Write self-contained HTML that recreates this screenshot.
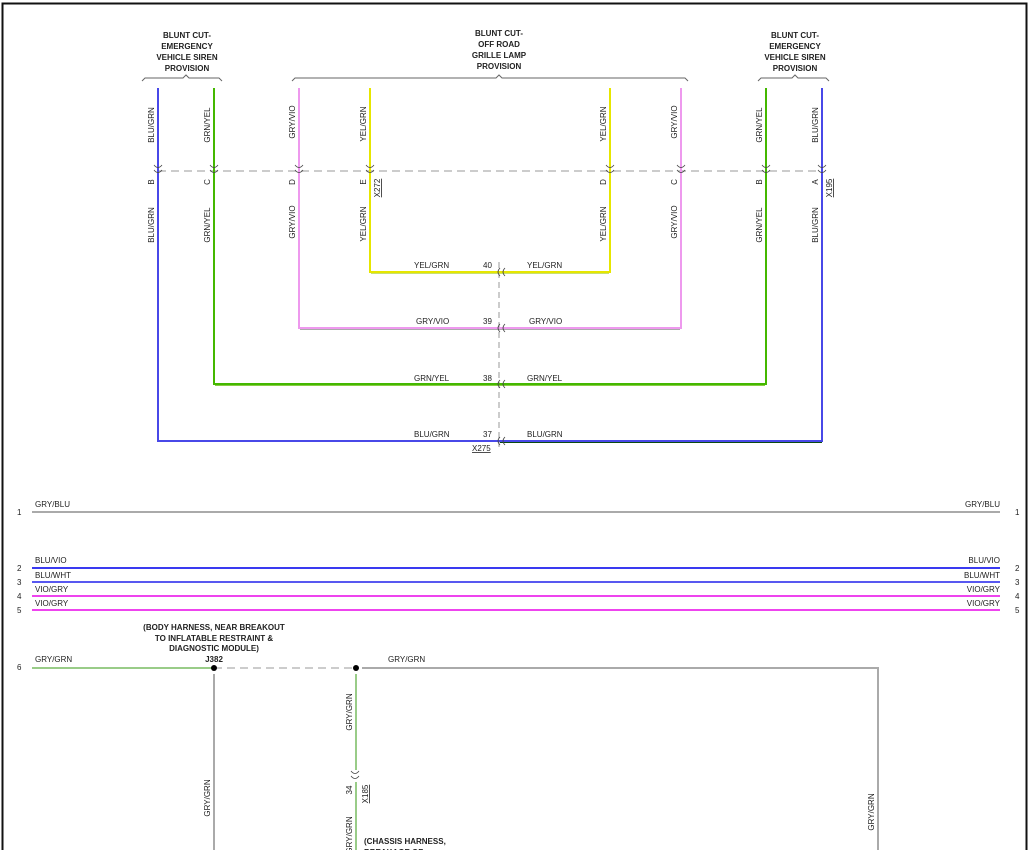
<!DOCTYPE html>
<html><head><meta charset="utf-8"><style>
html,body{margin:0;padding:0;background:#fff;}
svg{display:block;font-family:"Liberation Sans",Arial,sans-serif;}
.t{font-size:8px;fill:#222;}
.b{font-size:8px;font-weight:bold;fill:#222;}
</style></head><body>
<svg width="1030" height="850" viewBox="0 0 1030 850" xmlns="http://www.w3.org/2000/svg">
<rect x="2.5" y="3.5" width="1024" height="850" fill="none" stroke="#111" stroke-width="2"/>

<!-- headers -->
<g class="b" text-anchor="middle">
<text x="187" y="38">BLUNT CUT-</text><text x="187" y="49">EMERGENCY</text><text x="187" y="60">VEHICLE SIREN</text><text x="187" y="71">PROVISION</text>
<text x="499" y="36">BLUNT CUT-</text><text x="499" y="47">OFF ROAD</text><text x="499" y="58">GRILLE LAMP</text><text x="499" y="69">PROVISION</text>
<text x="795" y="38">BLUNT CUT-</text><text x="795" y="49">EMERGENCY</text><text x="795" y="60">VEHICLE SIREN</text><text x="795" y="71">PROVISION</text>
</g>
<g fill="none" stroke="#666" stroke-width="1">
<path d="M142 81 l3 -3 H183 l3 -3 l3 3 H219 l3 3"/>
<path d="M292 81 l3 -3 H496 l3 -3 l3 3 H685 l3 3"/>
<path d="M758 81 l3 -3 H792 l3 -3 l3 3 H826 l3 3"/>
</g>

<!-- dashed connector line -->
<line x1="158" y1="171" x2="822" y2="171" stroke="#bbb" stroke-width="1.5" stroke-dasharray="8,5"/>
<line x1="499" y1="262" x2="499" y2="447" stroke="#999" stroke-width="1" stroke-dasharray="6,4"/>

<!-- vertical wires -->
<g stroke-width="2" fill="none">
<path d="M158 88 V441 H822 V88" stroke="#4848e8"/>
<path d="M214 88 V384 H766 V88" stroke="#44b800"/>
<path d="M299 88 V328 H681 V88" stroke="#ee99ee"/>
<path d="M370 88 V272 H610 V88" stroke="#e6e600"/>
</g>
<g stroke-width="1" fill="none">
<path d="M500 442.5 H822" stroke="#0a4a10"/>
<path d="M300 329.5 H680" stroke="#aaa"/>
<path d="M215 385.5 H765" stroke="#88cc44"/>
<path d="M371 273.5 H609" stroke="#c8e070"/>
</g>

<!-- connector symbols at y=171 -->
<g fill="none" stroke="#444" stroke-width="0.8">
<path d="M154 165 q4 5 8 0 M154 170 q4 5 8 0"/>
<path d="M210 165 q4 5 8 0 M210 170 q4 5 8 0"/>
<path d="M295 165 q4 5 8 0 M295 170 q4 5 8 0"/>
<path d="M366 165 q4 5 8 0 M366 170 q4 5 8 0"/>
<path d="M606 165 q4 5 8 0 M606 170 q4 5 8 0"/>
<path d="M677 165 q4 5 8 0 M677 170 q4 5 8 0"/>
<path d="M762 165 q4 5 8 0 M762 170 q4 5 8 0"/>
<path d="M818 165 q4 5 8 0 M818 170 q4 5 8 0"/>
<path d="M500 268 q-4 4 0 8 M505 268 q-4 4 0 8"/>
<path d="M500 324 q-4 4 0 8 M505 324 q-4 4 0 8"/>
<path d="M500 380 q-4 4 0 8 M505 380 q-4 4 0 8"/>
<path d="M500 437 q-4 4 0 8 M505 437 q-4 4 0 8"/>
<path d="M351 771 q4 5 8 0 M351 776 q4 5 8 0"/>
</g>

<!-- vertical labels -->
<g class="t" text-anchor="middle">
<text transform="translate(154,125) rotate(-90)">BLU/GRN</text>
<text transform="translate(154,225) rotate(-90)">BLU/GRN</text>
<text transform="translate(154,182) rotate(-90)">B</text>
<text transform="translate(210,125) rotate(-90)">GRN/YEL</text>
<text transform="translate(210,225) rotate(-90)">GRN/YEL</text>
<text transform="translate(210,182) rotate(-90)">C</text>
<text transform="translate(295,122) rotate(-90)">GRY/VIO</text>
<text transform="translate(295,222) rotate(-90)">GRY/VIO</text>
<text transform="translate(295,182) rotate(-90)">D</text>
<text transform="translate(366,124) rotate(-90)">YEL/GRN</text>
<text transform="translate(366,224) rotate(-90)">YEL/GRN</text>
<text transform="translate(366,182) rotate(-90)">E</text>
<text transform="translate(380,188) rotate(-90)" text-decoration="underline">X272</text>
<text transform="translate(606,124) rotate(-90)">YEL/GRN</text>
<text transform="translate(606,224) rotate(-90)">YEL/GRN</text>
<text transform="translate(606,182) rotate(-90)">D</text>
<text transform="translate(677,122) rotate(-90)">GRY/VIO</text>
<text transform="translate(677,222) rotate(-90)">GRY/VIO</text>
<text transform="translate(677,182) rotate(-90)">C</text>
<text transform="translate(762,125) rotate(-90)">GRN/YEL</text>
<text transform="translate(762,225) rotate(-90)">GRN/YEL</text>
<text transform="translate(762,182) rotate(-90)">B</text>
<text transform="translate(818,125) rotate(-90)">BLU/GRN</text>
<text transform="translate(818,225) rotate(-90)">BLU/GRN</text>
<text transform="translate(818,182) rotate(-90)">A</text>
<text transform="translate(832,188) rotate(-90)" text-decoration="underline">X195</text>
</g>

<!-- horizontal labels -->
<g class="t">
<text x="414" y="268">YEL/GRN</text><text x="483" y="268">40</text><text x="527" y="268">YEL/GRN</text>
<text x="416" y="324">GRY/VIO</text><text x="483" y="324">39</text><text x="529" y="324">GRY/VIO</text>
<text x="414" y="381">GRN/YEL</text><text x="483" y="381">38</text><text x="527" y="381">GRN/YEL</text>
<text x="414" y="437">BLU/GRN</text><text x="483" y="437">37</text><text x="527" y="437">BLU/GRN</text>
<text x="472" y="451" text-decoration="underline">X275</text>
</g>

<!-- bus lines -->
<g stroke-width="2">
<line x1="32" y1="512" x2="1000" y2="512" stroke="#aaa"/>
<line x1="32" y1="568" x2="1000" y2="568" stroke="#3a3af0"/>
<line x1="32" y1="582" x2="1000" y2="582" stroke="#5858f0"/>
<line x1="32" y1="596" x2="1000" y2="596" stroke="#ee44ee"/>
<line x1="32" y1="610" x2="1000" y2="610" stroke="#ee44ee"/>
</g>
<g class="t">
<text x="35" y="507">GRY/BLU</text><text x="1000" y="507" text-anchor="end">GRY/BLU</text>
<text x="35" y="563">BLU/VIO</text><text x="1000" y="563" text-anchor="end">BLU/VIO</text>
<text x="35" y="578">BLU/WHT</text><text x="1000" y="578" text-anchor="end">BLU/WHT</text>
<text x="35" y="592">VIO/GRY</text><text x="1000" y="592" text-anchor="end">VIO/GRY</text>
<text x="35" y="606">VIO/GRY</text><text x="1000" y="606" text-anchor="end">VIO/GRY</text>
<text x="17" y="515">1</text><text x="1015" y="515">1</text>
<text x="17" y="571">2</text><text x="1015" y="571">2</text>
<text x="17" y="585">3</text><text x="1015" y="585">3</text>
<text x="17" y="599">4</text><text x="1015" y="599">4</text>
<text x="17" y="613">5</text><text x="1015" y="613">5</text>
<text x="17" y="670">6</text>
</g>

<!-- bottom GRY/GRN -->
<line x1="214" y1="668" x2="355" y2="668" stroke="#bbb" stroke-width="1.5" stroke-dasharray="8,5"/>
<g stroke-width="2" fill="none">
<path d="M32 668 H212" stroke="#99cc88"/>
<path d="M362 668 H878 V850" stroke="#aaa"/>
<path d="M214 674 V850" stroke="#aaa"/>
<path d="M356 674 V770 M356 782 V850" stroke="#99cc88"/>
</g>
<circle cx="214" cy="668" r="3" fill="#000"/>
<circle cx="356" cy="668" r="3" fill="#000"/>
<g class="b" text-anchor="middle">
<text x="214" y="630">(BODY HARNESS, NEAR BREAKOUT</text>
<text x="214" y="641">TO INFLATABLE RESTRAINT &amp;</text>
<text x="214" y="651">DIAGNOSTIC MODULE)</text>
<text x="214" y="662">J382</text>
</g>
<g class="t">
<text x="35" y="662">GRY/GRN</text>
<text x="388" y="662">GRY/GRN</text>
<text transform="translate(210,798) rotate(-90)" text-anchor="middle">GRY/GRN</text>
<text transform="translate(352,712) rotate(-90)" text-anchor="middle">GRY/GRN</text>
<text transform="translate(352,835) rotate(-90)" text-anchor="middle">GRY/GRN</text>
<text transform="translate(352,790) rotate(-90)" text-anchor="middle">34</text>
<text transform="translate(368,794) rotate(-90)" text-anchor="middle" text-decoration="underline">X185</text>
<text transform="translate(874,812) rotate(-90)" text-anchor="middle">GRY/GRN</text>
</g>
<text class="b" x="364" y="844">(CHASSIS HARNESS,</text>
<text class="b" x="364" y="855">BREAKAGE OF</text>
</svg>
</body></html>
